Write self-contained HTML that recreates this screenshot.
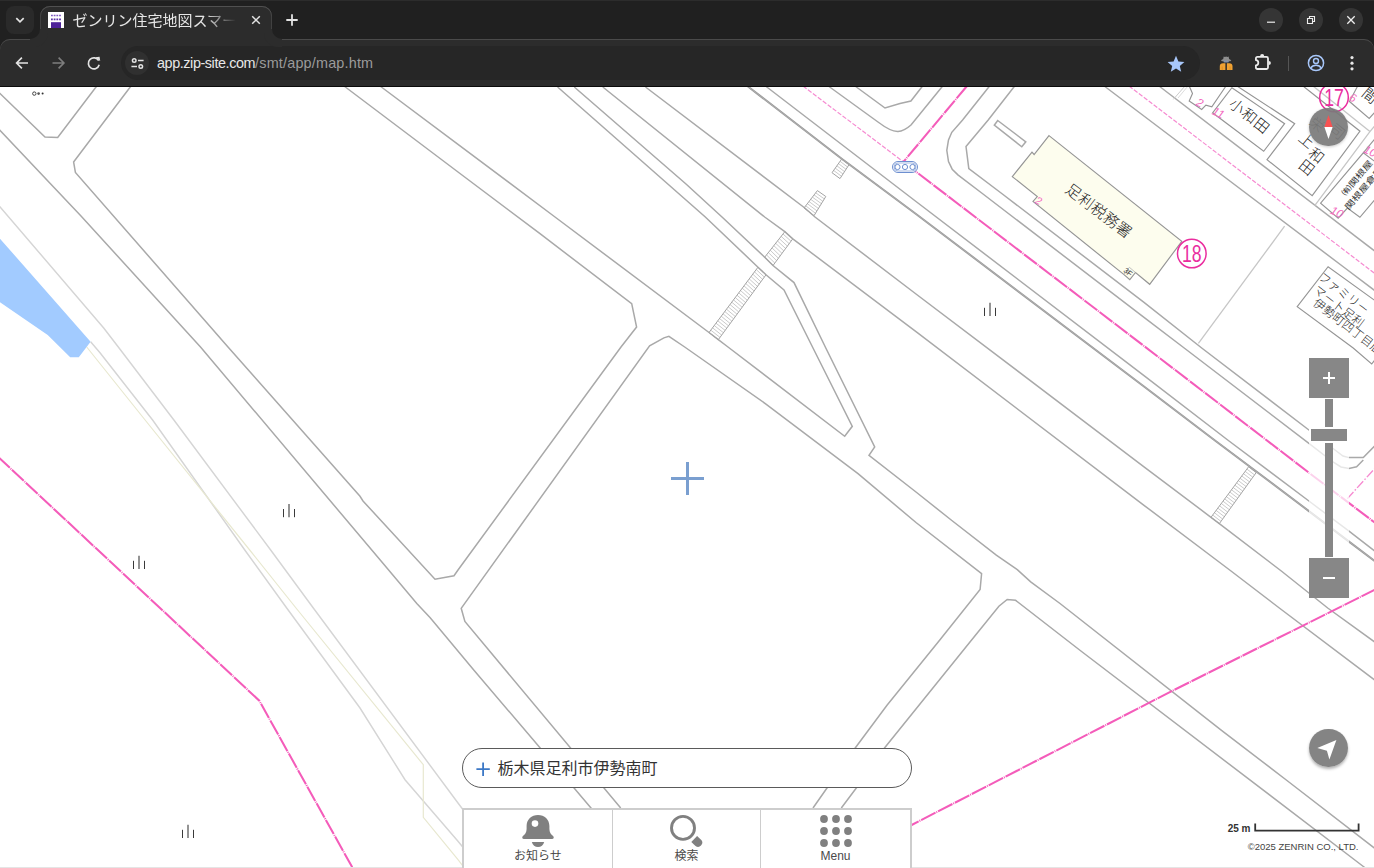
<!DOCTYPE html>
<html lang="ja"><head><meta charset="utf-8"><title>ゼンリン住宅地図スマートフォン</title>
<style>
html,body{margin:0;padding:0;background:#fff}
body{width:1374px;height:868px;overflow:hidden;position:relative;font-family:'Liberation Sans','Noto Sans CJK JP',sans-serif}
#map{position:absolute;left:0;top:0;width:1374px;height:868px}
.abs{position:absolute}
/* ---------- browser chrome ---------- */
#frame{position:absolute;left:0;top:0;width:1374px;height:87px;background:#202020}
#frame .topl{position:absolute;left:0;top:0;width:1374px;height:1px;background:#2c2c2c}
#tabsearch{position:absolute;left:6px;top:6px;width:28px;height:28px;border-radius:8px;background:#2a2a2a}
#tab{position:absolute;z-index:2;left:40px;top:6px;width:232px;height:34px;background:#2c2c2c;border-radius:10px 10px 0 0;box-shadow:inset 0 1px 0 #505050,inset 1px 0 0 #414141,inset -1px 0 0 #414141}
#tab:before,#tab:after{content:"";position:absolute;bottom:1px;width:10px;height:10px}
#tab:before{left:-10px;border-bottom-right-radius:10px;box-shadow:4px 4px 0 4px #2c2c2c}
#tab:after{right:-10px;border-bottom-left-radius:10px;box-shadow:-4px 4px 0 4px #2c2c2c}
#title{position:absolute;left:32.5px;top:2px;width:164px;height:26px;line-height:26px;font-size:15px;color:#e6e6e6;white-space:nowrap;overflow:hidden;
 -webkit-mask-image:linear-gradient(90deg,#000 132px,transparent 163px);mask-image:linear-gradient(90deg,#000 132px,transparent 163px)}
#toolbar{position:absolute;left:0;top:39px;width:1374px;height:47px;background:#2c2c2c;border-radius:10px 10px 0 0;box-shadow:inset 0 1px 0 #4a4a4a}
#sep{position:absolute;left:0;top:86px;width:1374px;height:1px;background:#0c0c0c}
#omni{position:absolute;left:121px;top:46px;width:1079px;height:34px;border-radius:17px;background:#262626}
#siteinfo{position:absolute;left:4px;top:5px;width:24px;height:24px;border-radius:12px;background:#303030}
#url{position:absolute;left:36px;top:0;height:34px;line-height:34px;font-size:14.4px;color:#e8e8e8;white-space:nowrap;letter-spacing:-0.42px}
#url span{color:#9b9b9b;letter-spacing:0.19px}
.wbtn{position:absolute;top:8px;width:24px;height:24px;border-radius:12px;background:#353535}
/* ---------- map UI ---------- */
#search{position:absolute;left:462px;top:748px;width:448px;height:38px;border:1px solid #5a5a5a;border-radius:20px;background:#fff}
#search .t{position:absolute;left:34.5px;top:0;line-height:39px;font-size:16px;color:#333;font-family:'Liberation Sans','Noto Sans CJK JP',sans-serif;white-space:nowrap}
#nav{position:absolute;left:462px;top:808px;width:446px;height:60px;background:#fff;border:2px solid #cdcdcd;border-bottom:none}
#nav .c{position:absolute;top:0;height:60px;width:149px}
#nav .d{position:absolute;top:0;width:1px;height:60px;background:#cdcdcd}
#nav .l{position:absolute;width:80px;top:38.300px;text-align:center;font-size:12px;line-height:16px;color:#4a4a4a;font-family:'Liberation Sans','Noto Sans CJK JP',sans-serif}
#zoom{position:absolute;left:1309px;top:358px;width:40px;height:240px;background:rgba(255,255,255,.72)}
#zoom .b{position:absolute;left:0;width:40px;height:40px;background:#878787}
#zoom .tr{position:absolute;left:16px;width:8px;background:#878787}
#zoom .h{position:absolute;left:0;top:69px;width:36px;height:12px;background:#878787;border:2px solid #fff}
.round{position:absolute;width:38.6px;height:38.6px;border-radius:50%;background:rgba(122,122,122,.92)}
#scale{position:absolute;left:1200px;top:822.200px;width:50.500px;text-align:right;font-size:10px;font-weight:bold;color:#333;line-height:14px;font-family:'Liberation Sans','Noto Sans CJK JP',sans-serif}
#copy{position:absolute;right:15.500px;top:839.500px;font-size:9.500px;color:#444;line-height:14px;white-space:nowrap;font-family:'Liberation Sans','Noto Sans CJK JP',sans-serif}
#bot{position:absolute;left:0;top:866.600px;width:1374px;height:2px;background:#e5e5e5}
</style></head>
<body>
<svg id="map" viewBox="0 0 1374 868">
<polygon points="-2.0,236.4 90.6,341.8 78.8,357.3 70.2,357.3 47.7,334.9 -2.0,301.0" fill="#a2cbff"/>
<polyline points="-2.0,204.5 103.7,328.0 118.3,347.0 173.9,420.0 271.4,551.0 313.3,608.0 458.0,803.0 470.0,819.0" fill="none" stroke="#d5d5d5" stroke-width="1.45" />
<polyline points="90.6,341.8 100.0,352.7 152.6,420.0 245.5,551.0 286.7,608.0 360.0,708.0 405.0,779.7 458.0,841.3 480.0,868.0" fill="none" stroke="#d5d5d5" stroke-width="1.45" />
<polyline points="86.7,347.0 145.1,420.0 250.5,551.0 296.0,608.0 423.3,764.7 423.3,817.3 458.0,859.7 466.0,870.0" fill="none" stroke="#e8e8d0" stroke-width="1.2" />
<polyline points="-2.0,91.6 45.0,137.0 57.7,137.5 96.8,86.0" fill="none" stroke="#a9a9a9" stroke-width="1.5" />
<polyline points="-2.0,128.3 81.0,216.0 200.5,347.0 380.0,559.8 416.8,603.6 430.2,617.8 474.6,671.0 540.2,748.0 591.0,808.0 650.0,878.0" fill="none" stroke="#a9a9a9" stroke-width="1.5" />
<polyline points="131.0,86.0 73.6,162.0 75.4,172.4 228.0,347.0 360.0,496.3 363.0,501.0 435.0,579.3 454.0,575.7 458.0,570.0 621.0,347.0 636.6,327.0 631.7,303.7 540.0,233.7 458.0,172.0 344.0,86.0" fill="none" stroke="#a9a9a9" stroke-width="1.5" />
<polyline points="380.0,86.0 458.0,144.3 555.0,217.0 709.0,332.5 718.3,339.7 728.0,347.0 844.7,436.3 852.3,426.3 813.0,348.0 784.0,290.0 766.0,274.8 758.0,267.2 705.3,217.0 686.0,200.0 557.6,87.0" fill="none" stroke="#a9a9a9" stroke-width="1.5" />
<polyline points="574.3,87.0 686.0,184.0 722.0,217.0 764.7,257.2 773.0,265.5 794.0,282.6 825.8,348.0 874.7,447.0 869.0,455.3 916.0,492.0 951.2,520.0 996.3,555.2 1017.3,569.7 1030.7,581.9 1060.0,603.5 1221.5,730.3 1286.3,780.0 1376.0,849.3" fill="none" stroke="#a9a9a9" stroke-width="1.5" />
<polyline points="602.8,87.0 764.7,217.0 784.8,231.7 792.8,238.8 916.0,331.7 1144.0,505.3 1231.0,571.0 1279.3,608.0 1376.0,681.0" fill="none" stroke="#a9a9a9" stroke-width="1.5" />
<polyline points="645.5,87.0 804.8,208.0 815.0,217.0 916.0,294.0 1144.0,466.8 1211.0,517.3 1219.3,523.7 1281.3,571.0 1327.7,608.0 1376.0,643.0" fill="none" stroke="#a9a9a9" stroke-width="1.5" />
<polyline points="747.3,86.0 841.7,158.8 916.0,214.0 1144.0,386.5 1214.3,440.0 1308.9,511.1 1349.0,541.6 1376.0,562.0" fill="none" stroke="#999999" stroke-width="2.0" />
<polyline points="747.3,86.0 841.7,158.8 916.0,214.0 1144.0,386.5 1214.3,440.0 1308.9,511.1 1349.0,541.6 1376.0,562.0" fill="none" stroke="#c6c6c6" stroke-width="0.45" />
<polyline points="765.5,86.0 916.0,201.5 1144.0,375.6 1227.7,440.0 1308.9,501.0 1349.0,531.2 1376.0,552.0" fill="none" stroke="#a9a9a9" stroke-width="1.5" />
<path d="M828.3,86 L878,122 C887,128.800 892.500,131.800 898,131.500 S906.500,129 911,125 L942.7,86" fill="none" stroke="#a9a9a9" stroke-width="1.5"/>
<polyline points="855.0,86.0 885.0,108.0 900.0,103.6 910.9,101.0 922.6,86.0" fill="none" stroke="#a9a9a9" stroke-width="1.5" />
<polyline points="989.6,86.0 962.6,120.0 951.8,132.3 948.5,139.9 946.8,150.3 948.5,161.6 952.2,169.2 957.9,174.9 983.0,194.0 1144.0,317.4 1184.2,348.0 1308.9,443.4 1333.0,462.0 1341.0,467.0 1349.0,468.5 1356.6,466.8 1363.3,460.0" fill="none" stroke="#a9a9a9" stroke-width="1.5" />
<polyline points="1014.7,86.0 988.2,120.0 966.0,146.5 968.8,168.7 1002.4,194.0 1144.0,302.4 1201.7,348.0 1308.9,430.0 1335.0,450.0 1343.0,456.0 1349.0,457.6 1363.3,457.6 1376.0,444.6" fill="none" stroke="#a9a9a9" stroke-width="1.5" />
<polygon points="997.7,120.5 1025.8,141.8 1021.8,146.8 994.3,125.2" fill="none" stroke="#a9a9a9" stroke-width="1.5" />
<polyline points="1104.2,86.0 1344.9,268.0 1376.0,291.5" fill="none" stroke="#a9a9a9" stroke-width="1.5" />
<polyline points="1159.0,86.0 1376.0,252.0" fill="none" stroke="#a9a9a9" stroke-width="1.5" />
<polyline points="620.7,808.0 464.9,621.5 461.2,608.3 649.6,345.9 663.9,337.9 668.9,336.3 684.7,347.0 766.3,404.3 858.0,473.7 916.0,522.5 981.6,573.6 980.1,589.5 939.8,640.0 887.0,705.3 855.2,748.0 827.0,788.0 813.0,808.0" fill="none" stroke="#a9a9a9" stroke-width="1.5" />
<polyline points="841.3,808.0 856.3,788.0 884.5,748.0 971.6,640.0 998.9,606.2 1007.2,599.5 1015.6,600.3 1080.9,651.0 1362.7,866.0 1370.0,871.6" fill="none" stroke="#a9a9a9" stroke-width="1.5" />
<line x1="756.2" y1="269.5" x2="764.3" y2="277.1" stroke="#c4c4c4" stroke-width="0.9"/>
<line x1="754.5" y1="271.9" x2="762.6" y2="279.4" stroke="#c4c4c4" stroke-width="0.9"/>
<line x1="752.8" y1="274.2" x2="760.9" y2="281.8" stroke="#c4c4c4" stroke-width="0.9"/>
<line x1="751.0" y1="276.5" x2="759.2" y2="284.1" stroke="#c4c4c4" stroke-width="0.9"/>
<line x1="749.2" y1="278.9" x2="757.5" y2="286.4" stroke="#c4c4c4" stroke-width="0.9"/>
<line x1="747.5" y1="281.2" x2="755.8" y2="288.7" stroke="#c4c4c4" stroke-width="0.9"/>
<line x1="745.8" y1="283.5" x2="754.1" y2="291.0" stroke="#c4c4c4" stroke-width="0.9"/>
<line x1="744.0" y1="285.9" x2="752.4" y2="293.3" stroke="#c4c4c4" stroke-width="0.9"/>
<line x1="742.2" y1="288.2" x2="750.7" y2="295.7" stroke="#c4c4c4" stroke-width="0.9"/>
<line x1="740.5" y1="290.5" x2="749.0" y2="298.0" stroke="#c4c4c4" stroke-width="0.9"/>
<line x1="738.8" y1="292.9" x2="747.3" y2="300.3" stroke="#c4c4c4" stroke-width="0.9"/>
<line x1="737.0" y1="295.2" x2="745.6" y2="302.6" stroke="#c4c4c4" stroke-width="0.9"/>
<line x1="735.2" y1="297.5" x2="743.9" y2="304.9" stroke="#c4c4c4" stroke-width="0.9"/>
<line x1="733.5" y1="299.9" x2="742.1" y2="307.2" stroke="#c4c4c4" stroke-width="0.9"/>
<line x1="731.8" y1="302.2" x2="740.4" y2="309.6" stroke="#c4c4c4" stroke-width="0.9"/>
<line x1="730.0" y1="304.5" x2="738.7" y2="311.9" stroke="#c4c4c4" stroke-width="0.9"/>
<line x1="728.2" y1="306.8" x2="737.0" y2="314.2" stroke="#c4c4c4" stroke-width="0.9"/>
<line x1="726.5" y1="309.2" x2="735.3" y2="316.5" stroke="#c4c4c4" stroke-width="0.9"/>
<line x1="724.8" y1="311.5" x2="733.6" y2="318.8" stroke="#c4c4c4" stroke-width="0.9"/>
<line x1="723.0" y1="313.8" x2="731.9" y2="321.2" stroke="#c4c4c4" stroke-width="0.9"/>
<line x1="721.2" y1="316.2" x2="730.2" y2="323.5" stroke="#c4c4c4" stroke-width="0.9"/>
<line x1="719.5" y1="318.5" x2="728.5" y2="325.8" stroke="#c4c4c4" stroke-width="0.9"/>
<line x1="717.8" y1="320.8" x2="726.8" y2="328.1" stroke="#c4c4c4" stroke-width="0.9"/>
<line x1="716.0" y1="323.2" x2="725.1" y2="330.4" stroke="#c4c4c4" stroke-width="0.9"/>
<line x1="714.2" y1="325.5" x2="723.4" y2="332.7" stroke="#c4c4c4" stroke-width="0.9"/>
<line x1="712.5" y1="327.8" x2="721.7" y2="335.1" stroke="#c4c4c4" stroke-width="0.9"/>
<line x1="710.8" y1="330.2" x2="720.0" y2="337.4" stroke="#c4c4c4" stroke-width="0.9"/>
<polygon points="758.0,267.2 766.0,274.8 718.3,339.7 709.0,332.5" fill="none" stroke="#a4a4a4" stroke-width="1" />
<line x1="783.0" y1="234.0" x2="791.0" y2="241.2" stroke="#c4c4c4" stroke-width="0.9"/>
<line x1="781.1" y1="236.3" x2="789.2" y2="243.7" stroke="#c4c4c4" stroke-width="0.9"/>
<line x1="779.3" y1="238.7" x2="787.4" y2="246.1" stroke="#c4c4c4" stroke-width="0.9"/>
<line x1="777.5" y1="241.0" x2="785.6" y2="248.5" stroke="#c4c4c4" stroke-width="0.9"/>
<line x1="775.7" y1="243.3" x2="783.8" y2="250.9" stroke="#c4c4c4" stroke-width="0.9"/>
<line x1="773.8" y1="245.6" x2="782.0" y2="253.4" stroke="#c4c4c4" stroke-width="0.9"/>
<line x1="772.0" y1="247.9" x2="780.2" y2="255.8" stroke="#c4c4c4" stroke-width="0.9"/>
<line x1="770.2" y1="250.2" x2="778.4" y2="258.2" stroke="#c4c4c4" stroke-width="0.9"/>
<line x1="768.4" y1="252.6" x2="776.6" y2="260.6" stroke="#c4c4c4" stroke-width="0.9"/>
<line x1="766.5" y1="254.9" x2="774.8" y2="263.1" stroke="#c4c4c4" stroke-width="0.9"/>
<polygon points="784.8,231.7 792.8,238.8 773.0,265.5 764.7,257.2" fill="none" stroke="#a4a4a4" stroke-width="1" />
<line x1="840.1" y1="161.3" x2="847.5" y2="167.0" stroke="#c4c4c4" stroke-width="0.9"/>
<line x1="838.5" y1="163.6" x2="846.0" y2="169.3" stroke="#c4c4c4" stroke-width="0.9"/>
<line x1="836.9" y1="165.8" x2="844.5" y2="171.6" stroke="#c4c4c4" stroke-width="0.9"/>
<line x1="835.2" y1="168.1" x2="843.0" y2="174.0" stroke="#c4c4c4" stroke-width="0.9"/>
<line x1="833.6" y1="170.4" x2="841.5" y2="176.3" stroke="#c4c4c4" stroke-width="0.9"/>
<polygon points="841.7,159.0 849.0,164.7 840.0,178.6 832.0,172.7" fill="none" stroke="#a4a4a4" stroke-width="1" />
<line x1="815.7" y1="192.8" x2="824.3" y2="198.9" stroke="#c4c4c4" stroke-width="0.9"/>
<line x1="814.0" y1="194.9" x2="822.8" y2="201.3" stroke="#c4c4c4" stroke-width="0.9"/>
<line x1="812.4" y1="197.1" x2="821.4" y2="203.7" stroke="#c4c4c4" stroke-width="0.9"/>
<line x1="810.7" y1="199.3" x2="819.9" y2="206.1" stroke="#c4c4c4" stroke-width="0.9"/>
<line x1="809.0" y1="201.5" x2="818.4" y2="208.5" stroke="#c4c4c4" stroke-width="0.9"/>
<line x1="807.4" y1="203.7" x2="817.0" y2="210.9" stroke="#c4c4c4" stroke-width="0.9"/>
<line x1="805.7" y1="205.8" x2="815.5" y2="213.3" stroke="#c4c4c4" stroke-width="0.9"/>
<polygon points="817.4,190.6 825.8,196.5 814.0,215.7 804.0,208.0" fill="none" stroke="#a4a4a4" stroke-width="1" />
<line x1="1246.9" y1="469.1" x2="1254.5" y2="474.9" stroke="#c4c4c4" stroke-width="0.9"/>
<line x1="1245.2" y1="471.4" x2="1252.8" y2="477.2" stroke="#c4c4c4" stroke-width="0.9"/>
<line x1="1243.5" y1="473.7" x2="1251.2" y2="479.6" stroke="#c4c4c4" stroke-width="0.9"/>
<line x1="1241.8" y1="476.0" x2="1249.5" y2="481.9" stroke="#c4c4c4" stroke-width="0.9"/>
<line x1="1240.1" y1="478.3" x2="1247.8" y2="484.2" stroke="#c4c4c4" stroke-width="0.9"/>
<line x1="1238.3" y1="480.6" x2="1246.1" y2="486.5" stroke="#c4c4c4" stroke-width="0.9"/>
<line x1="1236.6" y1="482.9" x2="1244.5" y2="488.9" stroke="#c4c4c4" stroke-width="0.9"/>
<line x1="1234.9" y1="485.2" x2="1242.8" y2="491.2" stroke="#c4c4c4" stroke-width="0.9"/>
<line x1="1233.2" y1="487.5" x2="1241.1" y2="493.5" stroke="#c4c4c4" stroke-width="0.9"/>
<line x1="1231.5" y1="489.8" x2="1239.4" y2="495.8" stroke="#c4c4c4" stroke-width="0.9"/>
<line x1="1229.8" y1="492.0" x2="1237.8" y2="498.2" stroke="#c4c4c4" stroke-width="0.9"/>
<line x1="1228.1" y1="494.3" x2="1236.1" y2="500.5" stroke="#c4c4c4" stroke-width="0.9"/>
<line x1="1226.4" y1="496.6" x2="1234.4" y2="502.8" stroke="#c4c4c4" stroke-width="0.9"/>
<line x1="1224.7" y1="498.9" x2="1232.7" y2="505.1" stroke="#c4c4c4" stroke-width="0.9"/>
<line x1="1223.0" y1="501.2" x2="1231.0" y2="507.4" stroke="#c4c4c4" stroke-width="0.9"/>
<line x1="1221.3" y1="503.5" x2="1229.4" y2="509.8" stroke="#c4c4c4" stroke-width="0.9"/>
<line x1="1219.5" y1="505.8" x2="1227.7" y2="512.1" stroke="#c4c4c4" stroke-width="0.9"/>
<line x1="1217.8" y1="508.1" x2="1226.0" y2="514.4" stroke="#c4c4c4" stroke-width="0.9"/>
<line x1="1216.1" y1="510.4" x2="1224.3" y2="516.7" stroke="#c4c4c4" stroke-width="0.9"/>
<line x1="1214.4" y1="512.7" x2="1222.7" y2="519.1" stroke="#c4c4c4" stroke-width="0.9"/>
<line x1="1212.7" y1="515.0" x2="1221.0" y2="521.4" stroke="#c4c4c4" stroke-width="0.9"/>
<polygon points="1248.6,466.8 1256.2,472.6 1219.3,523.7 1211.0,517.3" fill="none" stroke="#a4a4a4" stroke-width="1" />
<polygon points="1049.0,135.6 1181.8,241.3 1149.7,284.3 1135.5,272.5 1129.8,279.6 1123.7,274.4 1033.0,201.5 1037.3,196.5 1012.3,176.6 1032.0,152.2 1034.1,154.5" fill="#fdfdee" stroke="#959595" stroke-width="1.15" />
<polyline points="1123.7,274.4 1129.4,267.3 1135.5,272.5" fill="none" stroke="#b0b0b0" stroke-width="0.8" />
<polygon points="1231.9,87.7 1284.6,123.7 1263.7,151.3 1212.6,112.8" fill="none" stroke="#959595" stroke-width="1.15" />
<polyline points="1237.0,86.0 1294.7,123.7 1267.0,159.7 1312.2,195.6 1360.0,131.2 1303.9,86.8" fill="none" stroke="#959595" stroke-width="1.15" />
<polyline points="1189.2,86.0 1192.5,93.5 1189.2,101.0 1201.7,109.4 1205.9,105.2 1211.8,106.9 1226.0,86.0" fill="none" stroke="#959595" stroke-width="1.15" />
<polyline points="1173.3,99.4 1185.0,86.0" fill="none" stroke="#cccccc" stroke-width="1" />
<polyline points="1178.0,98.0 1188.0,86.0" fill="none" stroke="#dddddd" stroke-width="1" />
<polyline points="1284.6,226.2 1198.4,343.4" fill="none" stroke="#c6c6c6" stroke-width="1.3" />
<polyline points="1314.7,205.6 1369.9,131.6 1376.0,124.5" fill="none" stroke="#c6c6c6" stroke-width="1.3" />
<polyline points="1358.2,85.0 1349.5,101.5 1369.2,118.5 1376.0,111.0" fill="none" stroke="#959595" stroke-width="1.15" />
<polyline points="1313.0,86.0 1369.9,131.6" fill="none" stroke="#c6c6c6" stroke-width="1.3" />
<polyline points="1363.3,152.9 1376.0,137.5" fill="none" stroke="#959595" stroke-width="1.15" />
<polyline points="1376.0,162.4 1363.3,152.9 1320.6,203.1 1338.2,218.2 1347.4,208.1 1359.9,217.3 1376.0,198.2" fill="none" stroke="#959595" stroke-width="1.15" />
<polyline points="1376.0,301.3 1328.1,266.7 1297.2,306.6 1353.2,348.0 1371.7,364.0 1376.0,358.4" fill="none" stroke="#959595" stroke-width="1.15" />
<polyline points="803.0,86.0 903.6,162.0" fill="none" stroke="#f68bd1" stroke-width="1.2" stroke-dasharray="4.5 1.7"/>
<polyline points="1129.0,86.0 1195.9,137.0 1361.6,263.4 1376.0,274.4" fill="none" stroke="#f68bd1" stroke-width="1.2" stroke-dasharray="4.5 1.7"/>
<polyline points="1347.4,498.6 1376.0,467.1" fill="none" stroke="#f68bd1" stroke-width="1.4" stroke-dasharray="9 2 1.5 2"/>
<polyline points="967.0,86.0 903.3,162.0" fill="none" stroke="#f45cba" stroke-width="2.05" stroke-dasharray="16.2 0.9 1 0.9"/>
<polyline points="903.3,162.0 1144.0,346.0 1308.9,472.7 1376.0,523.5" fill="none" stroke="#f45cba" stroke-width="2.05" stroke-dasharray="16.2 0.9 1 0.9"/>
<polyline points="1376.0,589.1 1170.8,691.6 912.6,824.5 800.0,882.6" fill="none" stroke="#f45cba" stroke-width="2.05" stroke-dasharray="16.2 0.9 1 0.9"/>
<polyline points="-2.0,456.8 160.0,608.0 259.3,700.7 351.7,866.3 356.0,874.0" fill="none" stroke="#f45cba" stroke-width="2.05" stroke-dasharray="16.2 0.9 1 0.9"/>
<rect x="892.5" y="161.5" width="25" height="11" rx="5.5" fill="#fff" stroke="#6d8fd0" stroke-width="1"/>
<rect x="894" y="163" width="22" height="8" rx="4" fill="none" stroke="#6d8fd0" stroke-width="0.6"/>
<circle cx="897.5" cy="167" r="2.6" fill="#fff" stroke="#6d8fd0" stroke-width="1"/>
<circle cx="905" cy="167" r="2.6" fill="#fff" stroke="#6d8fd0" stroke-width="1"/>
<circle cx="912.5" cy="167" r="2.6" fill="#fff" stroke="#6d8fd0" stroke-width="1"/>
<path d="M283.5,509.00000000000006V517.2 M294.5,509.00000000000006V517.2" stroke="#3a3a3a" stroke-width="1" fill="none"/>
<path d="M289,504.00000000000006V517.2" stroke="#707070" stroke-width="1.5" fill="none"/>
<path d="M133.5,560.8V569 M144.5,560.8V569" stroke="#3a3a3a" stroke-width="1" fill="none"/>
<path d="M139,555.8V569" stroke="#707070" stroke-width="1.5" fill="none"/>
<path d="M182.5,829.8V838 M193.5,829.8V838" stroke="#3a3a3a" stroke-width="1" fill="none"/>
<path d="M188,824.8V838" stroke="#707070" stroke-width="1.5" fill="none"/>
<path d="M984.5,307.8V316 M995.5,307.8V316" stroke="#3a3a3a" stroke-width="1" fill="none"/>
<path d="M990,302.8V316" stroke="#707070" stroke-width="1.5" fill="none"/>
<circle cx="34.3" cy="93.6" r="1.7" fill="none" stroke="#333" stroke-width="0.9"/><circle cx="38.6" cy="93.6" r="1.3" fill="#555"/><circle cx="42.6" cy="93.6" r="1" fill="#333"/>
<text transform="translate(1064.2,191.6) rotate(37)" font-family="'Liberation Sans','Noto Sans CJK JP',sans-serif" font-size="15.3" font-weight="300" fill="#222" text-anchor="start"  letter-spacing="0.40">足利税務署</text>
<text transform="translate(1227.9,105.8) rotate(38.5)" font-family="'Liberation Sans','Noto Sans CJK JP',sans-serif" font-size="14.8" font-weight="300" fill="#222" text-anchor="start"  letter-spacing="0.90">小和田</text>
<text transform="translate(1297.4,139.7) rotate(39)" font-family="'Liberation Sans','Noto Sans CJK JP',sans-serif" font-size="15" font-weight="300" fill="#222" text-anchor="start" >上</text>
<text transform="translate(1307.2,154.9) rotate(39)" font-family="'Liberation Sans','Noto Sans CJK JP',sans-serif" font-size="15" font-weight="300" fill="#222" text-anchor="start" >和</text>
<text transform="translate(1297.4,167.1) rotate(39)" font-family="'Liberation Sans','Noto Sans CJK JP',sans-serif" font-size="15" font-weight="300" fill="#222" text-anchor="start" >田</text>
<text transform="translate(1317.7,278.4) rotate(37.5)" font-family="'Liberation Sans','Noto Sans CJK JP',sans-serif" font-size="11.8" font-weight="300" fill="#222" text-anchor="start"  letter-spacing="0.15">ファミリー</text>
<text transform="translate(1312.7,291.6) rotate(37.5)" font-family="'Liberation Sans','Noto Sans CJK JP',sans-serif" font-size="11.8" font-weight="300" fill="#222" text-anchor="start"  letter-spacing="0.15">マート足利</text>
<text transform="translate(1312.3,304.4) rotate(37.5)" font-family="'Liberation Sans','Noto Sans CJK JP',sans-serif" font-size="11.8" font-weight="300" fill="#222" text-anchor="start"  letter-spacing="0.15">伊勢町四丁目店</text>
<text transform="translate(1360.8,95.0) rotate(39)" font-family="'Liberation Sans','Noto Sans CJK JP',sans-serif" font-size="15" font-weight="300" fill="#222" text-anchor="start" >間</text>
<text transform="translate(1308.4,124.1) rotate(39)" font-family="'Liberation Sans','Noto Sans CJK JP',sans-serif" font-size="14" font-weight="300" fill="#222" text-anchor="start" >栄</text>
<text transform="translate(1328.3,131.0) rotate(39)" font-family="'Liberation Sans','Noto Sans CJK JP',sans-serif" font-size="15" font-weight="300" fill="#222" text-anchor="start" >司</text>
<text transform="translate(1345.5,196.2) rotate(-50) scale(1.3,1)" font-family="'Liberation Sans','Noto Sans CJK JP',sans-serif" font-size="8.2" font-weight="400" fill="#333" text-anchor="start"  letter-spacing="0.11">㈲関根屋</text>
<text transform="translate(1348.8,210.5) rotate(-50) scale(1.3,1)" font-family="'Liberation Sans','Noto Sans CJK JP',sans-serif" font-size="8.2" font-weight="400" fill="#333" text-anchor="start"  letter-spacing="0.11">関根屋倉庫</text>
<text transform="translate(1122.9,271.4) rotate(37.5)" font-family="'Liberation Sans','Noto Sans CJK JP',sans-serif" font-size="7.5" font-weight="400" fill="#333" text-anchor="start" >3F</text>
<text transform="translate(1038.8,200.6) rotate(25)" x="0" y="3.8" text-anchor="middle" font-family="'Liberation Sans','Noto Sans CJK JP',sans-serif" font-weight="300" font-size="10.5" font-style="italic" fill="#f36cc0">2</text>
<text transform="translate(1200,102.7) rotate(25)" x="0" y="4.1" text-anchor="middle" font-family="'Liberation Sans','Noto Sans CJK JP',sans-serif" font-weight="300" font-size="11.5" font-style="italic" fill="#f36cc0">2</text>
<text transform="translate(1218.3,112.6) rotate(25)" x="0" y="4.1" text-anchor="middle" font-family="'Liberation Sans','Noto Sans CJK JP',sans-serif" font-weight="300" font-size="11.5" font-style="italic" fill="#f36cc0">11</text>
<text transform="translate(1337,211.9) rotate(25)" x="0" y="4.1" text-anchor="middle" font-family="'Liberation Sans','Noto Sans CJK JP',sans-serif" font-weight="300" font-size="11.5" font-style="italic" fill="#f36cc0">10</text>
<text transform="translate(1370.2,151) rotate(25)" x="0" y="4.1" text-anchor="middle" font-family="'Liberation Sans','Noto Sans CJK JP',sans-serif" font-weight="300" font-size="11.5" font-style="italic" fill="#f36cc0">10</text>
<text transform="translate(1353,97.7) rotate(25)" x="0" y="4.1" text-anchor="middle" font-family="'Liberation Sans','Noto Sans CJK JP',sans-serif" font-weight="300" font-size="11.5" font-style="italic" fill="#f36cc0">6</text>
<circle cx="1334" cy="97.4" r="14.3" fill="none" stroke="#ea2d9f" stroke-width="1.5"/>
<text transform="translate(1334,106.0) scale(0.72,1)" font-family="'Liberation Sans','Noto Sans CJK JP',sans-serif" font-size="24.5" text-anchor="middle" fill="#ea2d9f">17</text>
<circle cx="1191.8" cy="253.5" r="14.3" fill="none" stroke="#ea2d9f" stroke-width="1.5"/>
<text transform="translate(1191.8,262.1) scale(0.72,1)" font-family="'Liberation Sans','Noto Sans CJK JP',sans-serif" font-size="24.5" text-anchor="middle" fill="#ea2d9f">18</text>
</svg>

<!-- crosshair -->
<svg class="abs" style="left:670px;top:461px" width="35" height="35" viewBox="0 0 35 35"><path d="M16,1h3v33h-3z M1,16h33v3h-33z" fill="#7a9fd0"/></svg>

<!-- compass -->
<div class="round" style="left:1309.2px;top:107.9px;box-shadow:0 1px 3px rgba(0,0,0,.22)"></div>
<svg class="abs" style="left:1318px;top:112px" width="22" height="30" viewBox="0 0 22 30"><path d="M10.5,3 L14.6,15 H6.4Z" fill="#f85252"/><path d="M6.4,15 H14.6 L10.5,27Z" fill="#fff"/></svg>

<!-- zoom control -->
<div id="zoom">
 <div class="b" style="top:0"></div><div class="tr" style="top:41px;height:28px"></div>
 <div class="h"></div>
 <div class="tr" style="top:85px;height:114px"></div><div class="b" style="top:200px"></div>
 <svg class="abs" style="left:0;top:0" width="40" height="240" viewBox="0 0 40 240"><path d="M14,20H26 M20,14V26 M14,220H26" stroke="#fff" stroke-width="2" fill="none"/></svg>
</div>

<!-- locate button -->
<div class="round" style="left:1309px;top:728.7px;box-shadow:0 2px 3px rgba(0,0,0,.3)"></div>
<svg class="abs" style="left:1316px;top:736px" width="26" height="26" viewBox="0 0 26 26"><path d="M20.400,4 L1.300,12.100 L10.900,14.700 L13.400,23.600Z" fill="#fff"/></svg>

<!-- scale + copyright -->
<div id="scale">25 m</div>
<svg class="abs" style="left:1254px;top:823px" width="106" height="10" viewBox="0 0 106 10"><path d="M1.2,0.6V7.6H104.6V0.6" stroke="#333" stroke-width="1.8" fill="none"/></svg>
<div id="copy">©2025 ZENRIN CO., LTD.</div>

<!-- search box -->
<div id="search">
 <svg class="abs" style="left:12px;top:12px" width="16" height="16" viewBox="0 0 16 16"><path d="M8.1,1.5V14.9 M1.4,8.2H14.8" stroke="#3c78c6" stroke-width="1.8" fill="none"/></svg>
 <div class="t">栃木県足利市伊勢南町</div>
</div>

<!-- bottom nav -->
<div id="bot"></div>
<div id="nav">
 <div class="d" style="left:148px"></div><div class="d" style="left:296px"></div>
 <svg class="abs" style="left:0;top:0" width="446" height="58" viewBox="0 0 446 58"><g fill="#808080">
  <g transform="translate(58,4)"><path d="M16,0.900 C9.500,0.900 4.600,5.500 4.600,12 V15 C4.600,18.500 3,20.500 0.900,22 C-0.300,23 0.200,25.100 2,25.100 H30 C31.800,25.100 32.300,23 31.100,22 C29,20.500 27.400,18.500 27.400,15 V12 C27.400,5.500 22.500,0.900 16,0.900Z"/><path d="M9.800,27.900 H22.200 C21.500,31 19,33 16,33 S10.500,31 9.800,27.900Z"/><circle cx="13" cy="9.600" r="3.300" fill="#fff"/></g>
  <circle cx="219" cy="17.900" r="11.500" fill="none" stroke="#808080" stroke-width="2.900"/>
  <path d="M233.100,26 L227.300,31.900 L231.500,36 Q234.500,38.200 237,35.600 Q239.600,32.600 237.300,30 Z"/>
  <circle cx="360" cy="9" r="3.900"/><circle cx="372" cy="9" r="3.900"/><circle cx="384" cy="9" r="3.900"/>
  <circle cx="360" cy="21" r="3.900"/><circle cx="372" cy="21" r="3.900"/><circle cx="384" cy="21" r="3.900"/>
  <circle cx="360" cy="33" r="3.900"/><circle cx="372" cy="33" r="3.900"/><circle cx="384" cy="33" r="3.900"/>
 </g></svg>
 <div class="l" style="left:34px">お知らせ</div>
 <div class="l" style="left:182.600px">検索</div>
 <div class="l" style="left:331.500px">Menu</div>
</div>


<!-- ================= browser chrome ================= -->
<div id="frame"><div class="topl"></div>
 <div id="tabsearch"><svg class="abs" style="left:8px;top:8px" width="12" height="12" viewBox="0 0 12 12"><path d="M2.300,4.200 L6,7.800 L9.700,4.200" stroke="#e3e3e3" stroke-width="1.700" fill="none"/></svg></div>
 <div id="tab">
  <svg class="abs" style="left:8px;top:6px" width="16" height="16" viewBox="0 0 16 16"><rect width="16" height="16" fill="#fff"/><rect x="3" y="10.200" width="10" height="5.800" fill="#4d2298"/><path d="M3,3.500h10" stroke="#7c58c0" stroke-width="1.600" stroke-dasharray="1.800 0.900"/><path d="M3,7.400h10" stroke="#5b31a8" stroke-width="1.600" stroke-dasharray="1.800 0.900"/></svg>
  <div id="title">ゼンリン住宅地図スマートフォン</div>
  <svg class="abs" style="left:211px;top:9px" width="10" height="10" viewBox="0 0 10 10"><path d="M1.200,1.200 L8.800,8.800 M8.800,1.200 L1.200,8.800" stroke="#e3e3e3" stroke-width="1.500"/></svg>
 </div>
 <svg class="abs" style="left:285px;top:13px" width="14" height="14" viewBox="0 0 14 14"><path d="M7,1.300V12.700 M1.300,7H12.700" stroke="#e3e3e3" stroke-width="1.800"/></svg>
 <div class="wbtn" style="left:1259px"><svg class="abs" style="left:7px;top:7px" width="10" height="10" viewBox="0 0 10 10"><path d="M1,7.200H9" stroke="#eee" stroke-width="1.200"/></svg></div>
 <div class="wbtn" style="left:1299px"><svg class="abs" style="left:7px;top:7px" width="10" height="10" viewBox="0 0 10 10"><path d="M1.500,3.500H6.500V8.500H1.500Z M3.500,3.300V1.500H8.500V6.500H6.700" stroke="#eee" stroke-width="1.100" fill="none"/></svg></div>
 <div class="wbtn" style="left:1339px"><svg class="abs" style="left:7px;top:7px" width="10" height="10" viewBox="0 0 10 10"><path d="M1.300,1.300L8.700,8.700M8.700,1.300L1.300,8.700" stroke="#eee" stroke-width="1.300"/></svg></div>
 <div id="toolbar"></div>
 <svg class="abs" style="left:0;top:39px" width="120" height="47" viewBox="0 0 120 47"><g stroke="#e3e3e3" stroke-width="1.650" fill="none">
  <path d="M28,24H17 M21.900,18.700 L16.600,24 L21.900,29.300"/>
  <path d="M52.500,24H63.500 M58.600,18.700 L63.900,24 L58.600,29.300" stroke="#7d7d7d"/>
  <path d="M98.700,21.700 A5.500,5.500 0 1 0 99.200,25.800"/></g><path d="M95.600,17.900h4.300v4.300z" fill="#e3e3e3" transform="rotate(-8 98 20)"/></svg>
 <div id="omni"><div id="siteinfo"><svg class="abs" style="left:4.500px;top:4.500px" width="15" height="15" viewBox="0 0 16 16"><g stroke="#e3e3e3" stroke-width="1.600" fill="none"><circle cx="4.500" cy="4.800" r="1.900"/><path d="M8.500,4.800H14.500"/><circle cx="11.500" cy="11.200" r="1.900"/><path d="M1.500,11.200H7.500"/></g></svg></div>
  <div id="url">app.zip-site.com<span>/smt/app/map.htm</span></div>
  <svg class="abs" style="left:1045px;top:8px" width="20" height="20" viewBox="0 0 20 20"><path d="M10,1.800 L12.400,7.400 L18.400,7.900 L13.800,11.900 L15.200,17.800 L10,14.600 L4.800,17.800 L6.200,11.900 L1.600,7.900 L7.600,7.400Z" fill="#a8c7fa"/></svg>
 </div>
 <!-- extension icon -->
 <svg class="abs" style="left:1217px;top:54px" width="18" height="18" viewBox="0 0 18 18"><path d="M6.200,5 L6.700,2.400 L8,3.100 L9.150,2.400 L10.300,3.100 L11.600,2.400 L12.100,5 L14.300,6.300 L13.400,7.200 H4.900 L4,6.300Z" fill="#8e8e8e"/><rect x="6.500" y="6.600" width="5.300" height="1.900" rx="0.800" fill="#8291a8"/><path d="M2.800,16.100 V12.200 Q2.800,9.200 6,9.200 H8.400 V16.100Z M15.500,16.100 V12.200 Q15.500,9.200 12.300,9.200 H9.900 V16.100Z" fill="#f0a233"/><path d="M5.200,16.100 V12.500 M13.100,16.100 V12.500" stroke="#d98a1c" stroke-width="0.800"/></svg>
 <svg class="abs" style="left:1253px;top:52px" width="20" height="20" viewBox="0 0 20 20"><path d="M4.400,4.900 H13.500 Q15,4.900 15,6.400 V15.500 Q15,17 13.500,17 H4.400 Q2.900,17 2.900,15.500 V13.300 A2.400,2.600 0 0 0 2.900,8.100 V6.400 Q2.900,4.900 4.400,4.900Z" fill="none" stroke="#ececec" stroke-width="1.800" stroke-linejoin="round"/><path d="M7.100,4.300 A2.050,2.300 0 0 1 11.200,4.300Z M15.700,9.100 A2.200,1.900 0 0 1 15.700,12.900Z" fill="#ececec"/></svg>
 <div class="abs" style="left:1288px;top:56px;width:1px;height:15px;background:#555"></div>
 <svg class="abs" style="left:1306px;top:53px" width="20" height="20" viewBox="0 0 20 20"><circle cx="10" cy="10" r="7.600" fill="none" stroke="#a8c7fa" stroke-width="1.500"/><circle cx="10" cy="8" r="2.500" fill="none" stroke="#a8c7fa" stroke-width="1.400"/><path d="M4.800,15.200 C6,12.800 8,12.300 10,12.300 S14,12.800 15.200,15.200" fill="none" stroke="#a8c7fa" stroke-width="1.400"/></svg>
 <svg class="abs" style="left:1346px;top:53px" width="12" height="20" viewBox="0 0 12 20"><g fill="#e8e8e8"><circle cx="6" cy="4.600" r="1.600"/><circle cx="6" cy="10.200" r="1.600"/><circle cx="6" cy="15.800" r="1.600"/></g></svg>
 <div id="sep"></div>
</div>
</body></html>
